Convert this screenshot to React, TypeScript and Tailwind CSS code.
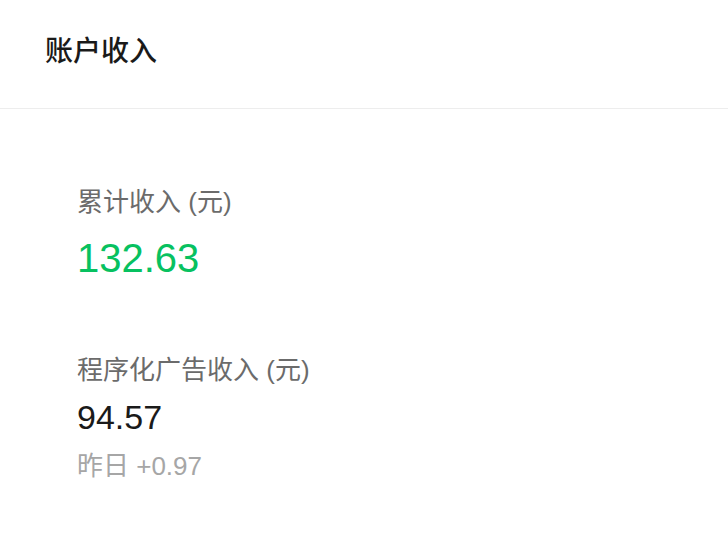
import * as React from "react";

const font = {
  fontFamily: '"Liberation Sans", "Noto Sans CJK SC", sans-serif',
};

export default function App() {
  return (
    <div className="min-h-screen w-full bg-white" style={font}>
      {/* Header */}
      <header className="h-[109px] px-[45px] flex items-center border-b border-[#ededed]">
        <span className="text-[28px] leading-[34px] font-medium text-[#1a1a1a] -mt-[4px]">账户收入</span>
      </header>

      {/* Content */}
      <main className="pl-[77px] pt-[75px]">
        <div className="text-[26px] leading-[36px] text-[#6b6b6b]">累计收入 (元)</div>
        <div className="mt-[14px] text-[40px] leading-[48px] text-[#07c160]">132.63</div>

        <div className="mt-[70px] text-[26px] leading-[36px] text-[#6b6b6b]">程序化广告收入 (元)</div>
        <div className="mt-[9px] text-[34px] leading-[40px] text-[#1a1a1a]">94.57</div>
        <div className="mt-[12px] text-[26px] leading-[34px] text-[#a6a6a6]">昨日 +0.97</div>
      </main>
    </div>
  );
}
